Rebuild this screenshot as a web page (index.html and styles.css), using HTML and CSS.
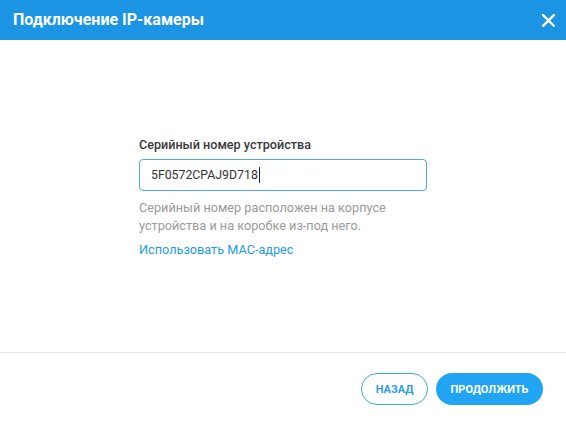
FILE: index.html
```html
<!DOCTYPE html>
<html lang="ru">
<head>
<meta charset="utf-8">
<title>Подключение IP-камеры</title>
<link rel="stylesheet" href="styles.css">
</head>
<body>
<div class="dialog">
  <header class="header">
    <h1 class="title">Подключение IP-камеры</h1>
    <button class="close" aria-label="Закрыть">
      <svg width="13" height="13" viewBox="0 0 13 13"><path d="M1 1L12 12M12 1L1 12" stroke="#fff" stroke-width="2.4" stroke-linecap="square"/></svg>
    </button>
  </header>
  <main class="content">
    <div class="form">
      <label class="label" for="sn">Серийный номер устройства</label>
      <div class="input"><span class="value">5F0572CPAJ9D718</span><span class="caret"></span></div>
      <p class="help">Серийный номер расположен на корпусе устройства и на коробке из-под него.</p>
      <a class="link" href="#">Использовать MAC-адрес</a>
    </div>
  </main>
  <footer class="footer">
    <button class="btn btn-outline">НАЗАД</button>
    <button class="btn btn-primary">ПРОДОЛЖИТЬ</button>
  </footer>
</div>
</body>
</html>
```
FILE: styles.css
```css
* { box-sizing: border-box; }
html, body { margin: 0; padding: 0; }
body {
  width: 566px;
  height: 425px;
  overflow: hidden;
  background: #fff;
  font-family: Roboto, "Noto Sans", sans-serif;
}
.dialog {
  display: flex;
  flex-direction: column;
  height: 425px;
}
.header {
  height: 40px;
  background: #1b95e3;
  display: flex;
  align-items: center;
  justify-content: space-between;
  padding: 0 11px 0 13px;
}
.title {
  margin: 0;
  color: #fff;
  font-size: 16px;
  font-weight: 700;
  line-height: 20px;
}
.close {
  border: 0;
  background: transparent;
  padding: 0;
  width: 13px;
  height: 13px;
  display: flex;
}
.content {
  flex: 1;
  display: flex;
  align-items: center;
  justify-content: center;
  border-bottom: 1px solid #e6e6e6;
  padding-top: 4px;
}
.form {
  width: 288px;
  display: flex;
  flex-direction: column;
}
.label {
  font-size: 12.6px;
  font-weight: 500;
  color: #3a3a3a;
  line-height: 16px;
  margin-bottom: 6px;
}
.input {
  height: 32px;
  border: 1px solid #4fa9ea;
  border-radius: 4px;
  padding: 0 11px;
  display: flex;
  align-items: center;
  font-size: 12.3px;
  color: #333;
}
.caret {
  width: 1px;
  height: 16px;
  background: #222;
  margin-left: 1px;
}
.help {
  margin: 8px 0 0;
  font-size: 12.7px;
  line-height: 18px;
  color: #9a9a9a;
}
.link {
  margin-top: 6px;
  font-size: 12.7px;
  line-height: 18px;
  color: #1e9be7;
  text-decoration: none;
}
.footer {
  height: 72px;
  display: flex;
  justify-content: flex-end;
  align-items: center;
  gap: 8px;
  padding: 0 23px 0 0;
}
.btn {
  height: 32px;
  border-radius: 16px;
  font-family: Roboto, sans-serif;
  font-size: 11px;
  font-weight: 700;
  padding: 0;
}
.btn-outline {
  width: 67px;
  background: #fff;
  border: 1px solid #3aa7f0;
  color: #2a9fe8;
}
.btn-primary {
  width: 107px;
  background: #22a4f4;
  border: 0;
  color: #fff;
}
```
